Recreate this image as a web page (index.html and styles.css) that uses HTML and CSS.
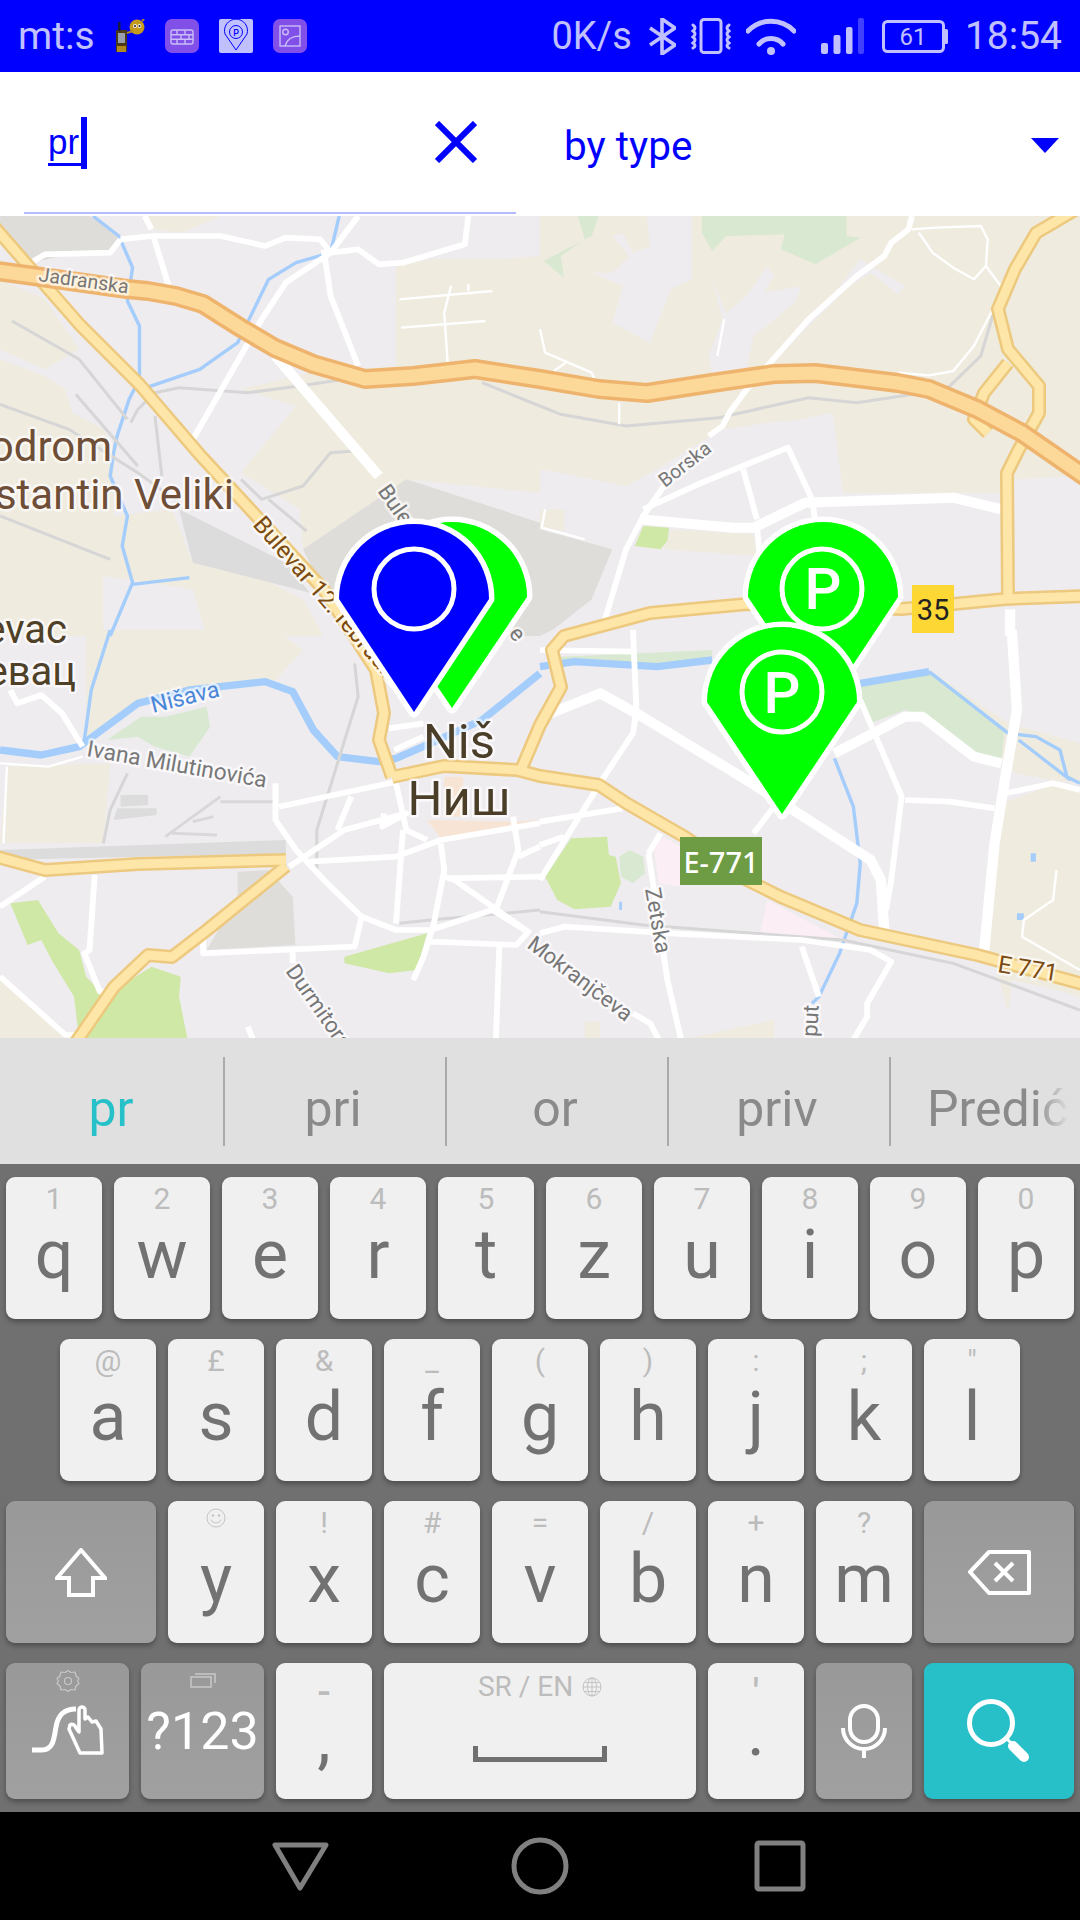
FILE: index.html
```html
<!DOCTYPE html>
<html lang="en">
<head>
<meta charset="utf-8">
<title>Map search</title>
<link rel="stylesheet" href="styles.css">
</head>
<body>
<div class="phone">
  <header class="status">
    <span class="st-text">mt:s</span>
    <svg class="st-gps" viewBox="0 0 30 34"><rect x="1" y="11" width="11" height="22" rx="1" fill="#4a3a18"/><rect x="3" y="14" width="7" height="10" fill="#9a9fb0"/><rect x="3" y="3" width="2.500" height="9" fill="#1a1a40"/><rect x="2" y="27" width="9" height="6" fill="#b08a20"/><circle cx="22" cy="8" r="7.500" fill="#c49a1c"/><circle cx="20" cy="7" r="2" fill="#eee"/><circle cx="24.500" cy="7" r="2" fill="#eee"/><circle cx="20" cy="7" r="1" fill="#222"/><circle cx="24.500" cy="7" r="1" fill="#222"/><path d="M27 2l2-2M12 14l6-2" stroke="#b08a20" stroke-width="2"/></svg>
    <svg class="st-app" viewBox="0 0 34 34"><rect width="34" height="34" rx="7" fill="#8050e8"/><g fill="none" stroke="#c9bdf8" stroke-width="1.400"><rect x="6" y="11" width="22" height="14" rx="2"/><path d="M6 15.700H28M6 20.300H28M12 11V15.700M20 11V15.700M16 15.700V20.300M24 15.700V20.300M12 20.300V25M20 20.300V25"/></g></svg>
    <svg class="st-app" viewBox="0 0 34 34"><rect width="34" height="34" rx="2" fill="#c0c0ff"/><path d="M17 31 L6 15 A11.500 11.500 0 1 1 28 15 Z" fill="none" stroke="#0000ff" stroke-width="1"/><circle cx="17" cy="13" r="6.500" fill="none" stroke="#0000ff" stroke-width="1"/><text x="17" y="16.500" class="st-p">P</text></svg>
    <svg class="st-app" viewBox="0 0 34 34"><rect width="34" height="34" rx="7" fill="#8050e8"/><g fill="none" stroke="#c9bdf8" stroke-width="1.400"><rect x="7" y="7" width="20" height="20"/><circle cx="12.500" cy="13" r="2.800"/><path d="M12 27 C14 20 20 17 27 17"/></g></svg>
    <span class="st-speed st-text">0K/s</span>
    <svg class="st-bt" viewBox="0 0 27 37"><path d="M1 10 L26 27 L13 36 V1 L26 10 L1 27" fill="none" stroke="#c0c0ff" stroke-width="3.600" stroke-linejoin="round"/></svg>
    <svg class="st-vib" viewBox="0 0 40 36"><rect x="10" y="1.500" width="20" height="33" rx="3" fill="none" stroke="#c0c0ff" stroke-width="3"/><path d="M2 7 q4 3 0 6 q4 3 0 6 q4 3 0 6 q4 3 0 5 M38 7 q-4 3 0 6 q-4 3 0 6 q-4 3 0 6 q-4 3 0 5" fill="none" stroke="#c0c0ff" stroke-width="3" stroke-linecap="round"/></svg>
    <svg class="st-wifi" viewBox="0 0 50 37"><path d="M2 13 A32 32 0 0 1 48 13 M13 26 A16 16 0 0 1 37 26" fill="none" stroke="#c0c0ff" stroke-width="5" stroke-linecap="round"/><circle cx="25" cy="33" r="4" fill="#c0c0ff"/></svg>
    <svg class="st-sig" viewBox="0 0 43 36"><rect x="0" y="25" width="7" height="11" rx="2" fill="#c0c0ff"/><rect x="12.500" y="17" width="7" height="19" rx="2" fill="#c0c0ff"/><rect x="25" y="9" width="6.500" height="27" rx="2" fill="#c0c0ff"/><rect x="37" y="0" width="6" height="36" rx="2" fill="#4040ff"/></svg>
    <svg class="st-bat" viewBox="0 0 66 33"><rect x="1.500" y="1.500" width="60" height="30" rx="4" fill="none" stroke="#c0c0ff" stroke-width="3"/><rect x="62" y="9" width="4" height="15" rx="1.500" fill="#c0c0ff"/><text x="31" y="25" class="st-batnum">61</text></svg>
    <span class="st-text st-time">18:54</span>
  </header>

  <section class="toolbar">
    <div class="search-field">
      <span class="query">pr</span><span class="caret"></span>
      <svg class="clear" viewBox="0 0 42 42"><path d="M2 2 L40 40 M40 2 L2 40" stroke="#0000ff" stroke-width="6"/></svg>
    </div>
    <div class="type-select">
      <span class="type-label">by type</span>
      <span class="type-arrow"></span>
    </div>
  </section>

  <section class="map">
    <svg class="map-svg" viewBox="0 216 1080 822">
      <defs>
        <path id="hw" d="M-10 270 L34 276 L127 289 L148 291 L176 296 L203 304 L241 328 L275 348 L313 364 L365 379 L413 376 L475 369 L540 379 L599 389 L647 393 L712 383 L774 374 L815 373 L857 378 L898 383 L929 389 L977 409 L1022 433 L1090 480"/>
        <path id="a1" d="M-10 222 L80 325 L140 385 L200 455 L260 520 L324 590 L376 670 L384 713 L379 740 L392 777"/>
        <path id="a2" d="M-10 855 L45 870 L138 864 L286 860"/>
        <path id="a3" d="M286 866 L207 930 L172 957 L148 955 L114 987 L76 1042"/>
        <path id="a4" d="M392 777 L444 766 L517 770 L540 776 L599 785 L626 803 L685 837 L747 880 L781 897 L860 930 L977 955 L1090 986"/>
        <path id="a5" d="M520 772 L540 725 L561 687 L552 650 L564 636 L650 613 L747 604 L902 609 L1005 599 L1090 596"/>
        <path id="a6" d="M1075 210 L1036 233 L1015 269 L998 309 L1008 349 L1039 386 L1039 413 L1019 449 L1007 473 L1008 599"/>
        <path id="a7" d="M1008 363 L984 393 L974 419 L988 433"/>
      </defs>

      <g transform="translate(0,216) scale(.34436,.33333)">
        <path class="tan" d="M1150 150 L1250 130 L1450 130 L1568 120 V830 L1180 790 L880 1000 L870 880 L700 770 L860 570 L700 520 L900 470 L1150 450Z"/>
        <path class="tan" d="M420 0 H640 L530 50 L430 40Z M0 190 L130 250 L230 400 L130 460 L0 400Z"/>
        <path class="tan" d="M0 430 L130 480 L190 520 L210 590 L300 640 L330 700 V900 L500 880 L560 1040 L750 1080 L880 1150 L940 1260 H600 L560 1120 L300 1080 V1260 H0Z"/>
        <path class="ind" d="M0 0 H260 L345 55 L335 100 L180 120 L90 140 L0 70Z"/>
        <path class="ind" d="M880 1000 L1180 790 L1450 880 L1568 920 V1260 H1000Z"/>
        <path class="rail-a" d="M520 880 L830 1040 L900 1130 L560 1040Z"/>
      </g>
      <g transform="translate(540,216) scale(.34436,.33333)">
        <path class="tan" d="M0 0 H1568 V780 L1380 790 L1340 830 H880 L850 590 L760 610 L660 620 L530 640 L340 760 L250 810 L60 770 L0 760Z"/>
        <path class="tan" d="M0 880 H70 V945 L0 935Z M380 940 L620 955 L630 1020 L360 1000Z"/>
        <path class="lilac" d="M150 170 L240 210 L210 320 L320 380 L380 220 L440 190 L440 0 H310 L320 90 L270 110 L240 50 L210 60 L260 120 L210 170Z"/>
        <path class="lilac" d="M500 190 L540 290 L600 240 L660 150 L680 180 L650 230 L760 210 L740 260 L620 360 L600 460 L680 440 L780 310 L870 210 L930 130 L1060 210 L1040 235 L960 170 L900 210 L760 350 L640 480 L500 480 L490 420 L530 310Z"/>
        <path class="lgreen" d="M110 0 L130 70 L60 120 L70 185 L10 135 L150 60 L170 0Z M470 0 H890 V60 L930 65 L800 145 L700 100 L710 55 L540 60 L500 105 L470 50Z"/>
        <path class="green" d="M300 930 L375 935 L370 975 L350 1000 L275 990Z"/>
        <path class="ind" d="M0 940 L210 1000 L150 1150 L40 1240 L0 1260Z"/>
      </g>
      <g transform="translate(0,630) scale(.34436,.33333)">
        <path class="tan" d="M250 0 H800 L880 60 L800 150 L640 160 L400 210 L250 330Z M20 410 L320 400 L300 640 H0Z M0 1040 L220 1230 H0Z"/>
        <path class="lgreen" d="M310 330 L410 260 L480 260 L600 230 L610 290 L550 380 L450 350 L400 320Z"/>
        <path class="green" d="M30 820 L110 810 L170 910 L230 960 L250 1040 L295 1090 L230 1230 L215 1100 L150 990 L120 930 L80 945Z"/>
        <path class="green" d="M230 1230 L340 1075 L440 1010 L525 1040 L520 1100 L545 1230Z"/>
        <path class="green" d="M1000 980 L1240 910 L1210 1020 L1130 1030 L1000 1000Z"/>
        <path class="ind" d="M690 725 L780 720 L850 800 L858 945 L600 960 L690 800Z"/>
        <path class="peach" d="M1240 570 L1500 575 L1568 570 L1280 625Z M1290 440 L1345 440 L1345 560 L1290 560Z"/>
        <path class="rail-a" d="M350 495 H430 V525 L350 530Z M340 535 H455 V555 L330 570Z M0 660 L830 630 V670 L0 690Z"/>
        <path class="rails-yard" d="M480 620 L640 500 M560 575 L620 560 M640 515 H800 M500 610 L630 615"/>
      </g>
      <g transform="translate(540,630) scale(.34436,.33333)">
        <path class="tan" d="M1310 660 L1340 520 L1490 465 L1568 480 V1100 L1500 1080 L1370 1050 L1360 1150 L1320 1000 L1290 960Z"/>
        <path class="tan" d="M1130 120 L1360 280 L1568 340 V460 L1490 450 L1380 430 L1340 390 L1350 295Z M130 1175 H175 V1230 H130Z M410 1230 L680 1170 V1230Z"/>
        <path class="lgreen" d="M930 150 L1130 130 L1350 295 L1340 390 L1260 370 L1120 260 L1060 240 L960 280 L930 230Z M60 80 L500 60 V85 L340 100 L60 90Z"/>
        <path class="green" d="M15 740 L90 625 L195 620 L200 675 L220 680 L235 760 L205 830 L100 838 L50 810Z"/>
        <path class="lgreen" d="M230 680 L260 660 L300 680 L305 730 L270 760 L235 740Z"/>
        <path class="pink" d="M330 650 L360 620 L410 650 V770 L345 760Z M660 810 L880 930 L640 905Z"/>
        <path class="water-s" d="M1425 670 h15 v25 h-15z M1385 850 h20 v20 h-20z M230 815 h8 v25 h-8z"/>
      </g>

      <g transform="translate(0,216) scale(.34436,.33333)">
        <path class="creek" d="M270 0 L345 60 L385 155 L370 255 L405 330 L405 490 L375 550 L340 660 L330 710 L320 780 L370 900 L355 990 L385 1100 L320 1260"/>
        <path class="creek" d="M385 1105 L550 1085 M425 515 L580 460 L690 380 L780 190 L860 140 L960 110 L985 0"/>
      </g>
      <g transform="translate(0,630) scale(.34436,.33333)">
        <path class="creek" d="M320 0 L265 180 L245 330"/>
        <path class="river" d="M0 360 L120 375 L230 350 L400 220 L550 180 L770 155 L850 185 L910 300 L980 380 L1100 395 L1150 385 L1250 340 L1400 270 L1568 130"/>
      </g>
      <g transform="translate(540,630) scale(.34436,.33333)">
        <path class="river" d="M0 110 L100 95 L340 110 L500 90 M930 160 L1130 125"/>
        <path class="creek" d="M1130 125 L1360 310 L1440 320 L1510 360 L1530 440 L1568 460 M1390 330 L1540 450 M855 385 L910 530 L930 700 L920 820 L870 970 L810 1100 L790 1120"/>
      </g>

      <g class="rails" transform="translate(0,216) scale(.34436,.33333)">
        <path d="M35 315 L230 430 L370 610 M220 535 L400 750 M380 620 L400 580 L450 530 L520 515 L720 530 L870 510 L1000 490 M450 600 L470 780 M0 565 L200 640 L400 770 L520 860 M1400 500 L1568 570 M700 790 L760 850 L880 810 L960 710 L1030 705 M780 850 L890 945 M0 900 L320 1030"/>
      </g>
      <g class="rails" transform="translate(540,216) scale(.34436,.33333)">
        <path d="M0 570 L60 595 L250 630 L520 605 L780 545 L920 560 L1180 520 L1280 420 L1320 280"/>
      </g>
      <g class="rails" transform="translate(0,630) scale(.34436,.33333)">
        <path d="M1030 100 L1040 200 L920 600 L920 720 M300 640 L320 540 L370 430 M1160 880 L1250 870 L1568 840"/>
      </g>
      <g class="rails" transform="translate(540,630) scale(.34436,.33333)">
        <path d="M0 845 L300 885 L880 930 L1200 1000 L1568 1140"/>
      </g>

      <g class="rd" transform="translate(0,216) scale(.34436,.33333)">
        <path d="M440 60 L640 60 L770 90 L830 65 L930 70 L960 110 L1040 100 L1100 145 L1170 140 L1350 85 L1360 0 M445 60 L490 210 M350 70 L440 60 M350 70 L320 110 L130 115 L90 140 M560 670 L760 310 L830 200 L960 110 L1040 0 M940 100 L960 240 L1040 450 M420 0 L440 40"/>
        <path class="rd-l" d="M800 420 L1100 780"/>
        <path class="rd-s" d="M1160 250 L1430 225 M1165 335 L1410 315 M1310 210 L1290 290 L1300 440 M1360 205 V225"/>
      </g>
      <g class="rd" transform="translate(540,216) scale(.34436,.33333)">
        <path d="M1080 0 L1070 40 L1020 80 L1000 120 L920 180 L780 310 L660 450 L600 520 L550 590 L530 630 L490 660 M360 810 L300 900 L250 1000 L180 1240 M300 880 L470 800 L720 695 L790 850 L800 920 M590 760 L630 910 M630 930 L640 1040"/>
        <path class="rd-l" d="M290 910 L560 935 L620 935 L770 860 L1200 845 L1340 880"/>
        <path class="rd-l" d="M1365 1180 V1260"/>
        <path class="rd-s" d="M1080 40 L1150 35 L1280 30 L1300 70 L1295 150 L1260 190 L1200 155 L1140 110 L1100 50 M1295 150 L1345 220 M1340 230 L1260 390 L1200 465 L1130 478 L1040 470 M535 310 L515 420 M0 340 L15 410 L150 470 L160 495 M40 465 L75 440 M230 560 V625 M15 880 L5 935 L130 970"/>
      </g>
      <g class="rd" transform="translate(0,630) scale(.34436,.33333)">
        <path d="M30 180 L50 220 L120 195 L180 250 L240 350 M800 460 V570 L860 660 L950 760 L1050 860 L1150 900 L1250 900 L1430 840 L1540 910 M810 530 L1150 455 M840 710 L1000 600 L1180 550 L1110 590 L1115 550 M900 695 L1150 680 L1280 630 L1568 580 M1130 295 L1230 280 M1145 360 L1230 320 M1020 500 L980 600 M1150 460 L1180 600 L1240 630 M1170 600 L1150 880 M1280 640 L1290 720 L1260 880 L1230 980 L1200 1050 M1490 560 L1505 660 L1440 840 M1505 680 L1568 650 M1290 740 L1320 750 L1540 910 M1300 745 L1568 740 M1250 935 L1500 945 L1530 910 M590 930 V970 L1030 950 L1050 860 M850 960 V1000 M275 735 L260 960 L245 970 L290 1085 L310 1085 M1450 950 L1440 1230 M130 740 L0 830 M0 1040 L190 1215 L225 1215 M720 1190 L735 1230"/>
        <path class="rd-s" d="M0 400 L140 410 L240 380 M20 410 L10 640"/>
      </g>
      <g class="rd" transform="translate(540,630) scale(.34436,.33333)">
        <path class="rd-l" d="M30 250 L175 190 L280 250 L600 450 L720 530 L960 690 L990 750 L1000 910 M855 370 L1060 260 L1110 260 L1260 380 L1340 400 M1370 0 L1385 240 L1350 450 L1320 640 L1290 960"/>
        <path d="M270 0 L280 240 L270 310 L180 450 L0 750 M930 210 L1050 500 L1020 750 L1005 840 M1060 510 L1190 515 L1320 535 M1350 490 L1490 460 L1568 480 M0 575 L240 535 M0 645 L70 620 M0 910 L70 890 L380 910 L760 930 L960 960 L1020 995 L950 1120 L950 1160 L910 1230 M315 670 L350 610 M315 670 L370 1050 L410 1230 M760 950 L810 1100 M270 1150 L320 1180 L345 1230 M620 610 L680 530 M0 60 L270 65"/>
        <path class="rd-s" d="M1500 720 L1490 810 L1405 870 L1400 920 L1568 1020"/>
      </g>

      <use href="#a1" class="art-c"/><use href="#a2" class="art-c"/><use href="#a3" class="art-c"/><use href="#a4" class="art-c"/><use href="#a5" class="art-c"/><use href="#a6" class="art-c"/><use href="#a7" class="art-c"/>
      <use href="#a1" class="art-f"/><use href="#a2" class="art-f"/><use href="#a3" class="art-f"/><use href="#a4" class="art-f"/><use href="#a5" class="art-f"/><use href="#a6" class="art-f"/><use href="#a7" class="art-f"/>
      <use href="#hw" class="hw-c"/><use href="#hw" class="hw-f"/>

      <text class="lb lb-s" x="38" y="281" transform="rotate(8 38 281)">Jadranska</text>
      <text class="lb lb-big lb-brown" x="112" y="461" text-anchor="end">Aerodrom</text>
      <text class="lb lb-big lb-brown" x="234" y="509" text-anchor="end">Konstantin Veliki</text>
      <text class="lb lb-big lb-dark" x="67" y="643" text-anchor="end">Medoševac</text>
      <text class="lb lb-big lb-dark" x="76" y="685" text-anchor="end">Медошевац</text>
      <text class="lb lb-water" x="153" y="713" transform="rotate(-14 153 713)">Nišava</text>
      <text class="lb lb-m" x="86" y="756" transform="rotate(10 86 756)">Ivana Milutinovića</text>
      <text class="lb lb-art" x="252" y="525" transform="rotate(49 252 525)">Bulevar 12. februara</text>
      <text class="lb lb-road" x="377" y="491" transform="rotate(55 377 491)">Bulevar</text>
      <text class="lb lb-road" x="508" y="634" transform="rotate(50 508 634)">e</text>
      <text class="lb lb-s" x="665" y="488" transform="rotate(-38 665 488)">Borska</text>
      <text class="lb lb-road" x="645" y="889" transform="rotate(80 645 889)">Zetska</text>
      <text class="lb lb-road" x="526" y="947" transform="rotate(37 526 947)">Mokranjčeva</text>
      <text class="lb lb-road" x="285" y="971" transform="rotate(55 285 971)">Durmitorska</text>
      <text class="lb lb-road" x="817" y="1037" transform="rotate(-87 817 1037)">put</text>
      <text class="lb lb-art" x="997" y="972" transform="rotate(9 997 972)">E 771</text>
      <text class="lb lb-city" x="459" y="758">Niš</text>
      <text class="lb lb-city" x="459" y="815">Ниш</text>

      <rect x="680" y="837" width="82" height="48" fill="#6e9c44"/>
      <text class="sign-e" x="721" y="873">E-771</text>
      <rect x="912" y="585" width="42" height="48" fill="#fdd835"/>
      <text class="sign-n" x="933" y="620">35</text>

      <path class="pin pin-green" d="M377 597 A75 75 0 0 1 527 597 L452 708Z"/>
      <path class="pin pin-blue" d="M339 599 A75 75 0 0 1 489 599 L414 712Z"/>
      <circle class="ring" cx="414" cy="589" r="40"/>
      <path class="pin pin-green" d="M748 597 A75 75 0 0 1 898 597 L823 710Z"/>
      <circle class="ring" cx="822" cy="589" r="40"/>
      <text class="pin-p" x="823" y="609">P</text>
      <path class="pin pin-green" d="M707 702 A75 75 0 0 1 857 702 L782 814Z"/>
      <circle class="ring" cx="782" cy="692" r="40"/>
      <text class="pin-p" x="782" y="713">P</text>
    </svg>
  </section>

  <section class="keyboard">
    <div class="suggest">
      <span class="sug sug-on">pr</span>
      <span class="sug">pri</span>
      <span class="sug">or</span>
      <span class="sug">priv</span>
      <span class="sug sug-last">Predić</span>
    </div>
    <div class="keys">
      <div class="row">
        <div class="key"><span class="hint">1</span><span class="ltr">q</span></div>
        <div class="key"><span class="hint">2</span><span class="ltr">w</span></div>
        <div class="key"><span class="hint">3</span><span class="ltr">e</span></div>
        <div class="key"><span class="hint">4</span><span class="ltr">r</span></div>
        <div class="key"><span class="hint">5</span><span class="ltr">t</span></div>
        <div class="key"><span class="hint">6</span><span class="ltr">z</span></div>
        <div class="key"><span class="hint">7</span><span class="ltr">u</span></div>
        <div class="key"><span class="hint">8</span><span class="ltr">i</span></div>
        <div class="key"><span class="hint">9</span><span class="ltr">o</span></div>
        <div class="key"><span class="hint">0</span><span class="ltr">p</span></div>
      </div>
      <div class="row row-mid">
        <div class="key"><span class="hint">@</span><span class="ltr">a</span></div>
        <div class="key"><span class="hint">£</span><span class="ltr">s</span></div>
        <div class="key"><span class="hint">&amp;</span><span class="ltr">d</span></div>
        <div class="key"><span class="hint">_</span><span class="ltr">f</span></div>
        <div class="key"><span class="hint">(</span><span class="ltr">g</span></div>
        <div class="key"><span class="hint">)</span><span class="ltr">h</span></div>
        <div class="key"><span class="hint">:</span><span class="ltr">j</span></div>
        <div class="key"><span class="hint">;</span><span class="ltr">k</span></div>
        <div class="key"><span class="hint">"</span><span class="ltr">l</span></div>
      </div>
      <div class="row">
        <div class="key key-fn key-wide">
          <svg class="ic-shift" viewBox="0 0 52 49"><path d="M26 2 L50 30 H38 V47 H14 V30 H2 Z" fill="none" stroke="#fff" stroke-width="4"/></svg>
        </div>
        <div class="key"><span class="hint"><svg class="ic-smile" viewBox="0 0 20 20"><g fill="none" stroke="#c4c4c4" stroke-width="1"><circle cx="10" cy="10" r="9"/><path d="M5 11.500 C6.500 16 13.500 16 15 11.500"/></g><circle cx="7" cy="7.500" r="1.200" fill="#c4c4c4"/><circle cx="13" cy="7.500" r="1.200" fill="#c4c4c4"/></svg></span><span class="ltr">y</span></div>
        <div class="key"><span class="hint">!</span><span class="ltr">x</span></div>
        <div class="key"><span class="hint">#</span><span class="ltr">c</span></div>
        <div class="key"><span class="hint">=</span><span class="ltr">v</span></div>
        <div class="key"><span class="hint">/</span><span class="ltr">b</span></div>
        <div class="key"><span class="hint">+</span><span class="ltr">n</span></div>
        <div class="key"><span class="hint">?</span><span class="ltr">m</span></div>
        <div class="key key-fn key-wide">
          <svg class="ic-del" viewBox="0 0 63 45"><path d="M21 2 H61 V43 H21 L2 22 Z M27 13 L45 31 M45 13 L27 31" fill="none" stroke="#fff" stroke-width="4" stroke-linejoin="round"/></svg>
        </div>
      </div>
      <div class="row row-low">
        <div class="key key-fn key-gesture">
          <svg class="ic-gear" viewBox="0 0 24 24"><path d="M12 1.500 L15 3.500 L19 3 L20 7 L23 9.500 L21.500 12 L23 14.500 L20 17 L19 21 L15 20.500 L12 22.500 L9 20.500 L5 21 L4 17 L1 14.500 L2.500 12 L1 9.500 L4 7 L5 3 L9 3.500 Z" fill="none" stroke="#c8c8c8" stroke-width="1.200" stroke-linejoin="round"/><circle cx="12" cy="12" r="3.500" fill="none" stroke="#c8c8c8" stroke-width="1.200"/></svg>
          <svg class="ic-swipe" viewBox="0 0 72 50"><path d="M0 45 H10 C22 45 22 32 24 22 C26 10 32 4 44 4" fill="none" stroke="#fff" stroke-width="5"/><path d="M38 20 C40 18 43 20 44 23 L47 27 V5 C47 1 53 1 53 5 V14 L56 12 L60 17 L64 16 L69 24 L70 48 H48 L37 24 Z" fill="#9d9d9d" stroke="#fff" stroke-width="3.500" stroke-linejoin="round"/></svg>
        </div>
        <div class="key key-fn key-gesture">
          <svg class="ic-win" viewBox="0 0 26 16"><g fill="none" stroke="#c8c8c8" stroke-width="1.500"><rect x="1" y="5" width="20" height="10"/><path d="M5 2 H25 V11"/></g></svg>
          <span class="ltr ltr-num">?123</span>
        </div>
        <div class="key"><span class="hint hint-dash">-</span><span class="ltr ltr-low">,</span></div>
        <div class="key key-space">
          <span class="hint hint-lang">SR / EN<svg class="ic-globe" viewBox="0 0 20 20"><g fill="none" stroke="#c4c4c4" stroke-width="1"><circle cx="10" cy="10" r="9"/><ellipse cx="10" cy="10" rx="4.500" ry="9"/><path d="M10 1 V19 M1 10 H19 M2.500 5.500 H17.500 M2.500 14.500 H17.500"/></g></svg></span>
          <svg class="ic-bar" viewBox="0 0 134 16"><path d="M2.500 0 V13.500 H131.500 V0" fill="none" stroke="#707070" stroke-width="5"/></svg>
        </div>
        <div class="key"><span class="hint hint-quote">'</span><span class="ltr ltr-dot">.</span></div>
        <div class="key key-fn">
          <svg class="ic-mic" viewBox="0 0 46 54"><g fill="none" stroke="#fff" stroke-width="4"><rect x="9" y="2" width="28" height="36" rx="14"/><path d="M2 24 A21 21 0 0 0 44 24 M23 45 V54"/></g></svg>
        </div>
        <div class="key key-go key-wide">
          <svg class="ic-search" viewBox="0 0 64 64"><circle cx="24" cy="24" r="21.500" fill="none" stroke="#fff" stroke-width="5"/><path d="M40 40 L46 46" stroke="#fff" stroke-width="3"/><path d="M46 47 L57 58" stroke="#fff" stroke-width="10" stroke-linecap="round"/></svg>
        </div>
      </div>
    </div>
  </section>

  <nav class="navbar">
    <svg class="nav-ic" viewBox="0 0 60 52"><path d="M6 5 H57 L31 48 Z" transform="translate(-1,0)" fill="none" stroke="#808080" stroke-width="5" stroke-linejoin="round"/></svg>
    <svg class="nav-ic" viewBox="0 0 60 60"><circle cx="30" cy="30" r="26" fill="none" stroke="#808080" stroke-width="5"/></svg>
    <svg class="nav-ic" viewBox="0 0 60 52"><rect x="7" y="3" width="46" height="46" rx="2" fill="none" stroke="#808080" stroke-width="5"/></svg>
  </nav>
</div>
</body>
</html>
```

FILE: styles.css
```css
* { box-sizing: border-box; }
html, body { margin: 0; padding: 0; }
body { width: 1080px; height: 1920px; overflow: hidden; font-family: Roboto, "Noto Sans CJK SC", sans-serif; background: #000; }
.phone { width: 1080px; height: 1920px; display: flex; flex-direction: column; }

/* status bar */
.status { height: 72px; background: #0000ff; display: flex; align-items: center; padding: 0 18px 0 18px; gap: 20px; color: #c0c0ff; flex: none; }
.st-text { font-size: 39px; line-height: 72px; }
.st-speed { margin-left: auto; font-size: 38px; margin-right: -3px; }
.st-time { font-size: 39px; margin-left: -3px; }
.st-gps { width: 30px; height: 34px; }
.st-app { width: 34px; height: 34px; }
.st-bt { width: 27px; height: 37px; }
.st-vib { width: 40px; height: 36px; margin-left: -5px; }
.st-wifi { width: 50px; height: 37px; margin-left: -5px; }
.st-sig { width: 43px; height: 36px; margin-left: 5px; }
.st-bat { width: 66px; height: 33px; margin-left: -2px; }
.st-p { font: 500 9px Roboto, sans-serif; fill: #0000ff; text-anchor: middle; }
.st-batnum { font: 400 24px Roboto, sans-serif; fill: #c0c0ff; text-anchor: middle; }

/* toolbar */
.toolbar { height: 144px; background: #fff; display: flex; flex: none; color: #0000ff; }
.search-field { width: 492px; height: 142px; margin-left: 24px; border-bottom: 2px solid #b4bcff; display: flex; align-items: center; padding-left: 24px; position: relative; }
.query { font-family: "Liberation Sans", sans-serif; font-size: 35px; line-height: 42px; border-bottom: 3px solid #0000ff; height: 45px; width: 36px; margin-top: 2px; }
.caret { width: 6px; height: 52px; background: #0000ff; margin-left: -3px; margin-top: 2px; }
.clear { width: 42px; height: 42px; margin-left: auto; margin-right: 39px; }
.type-select { flex: 1; display: flex; align-items: center; padding: 0 21px 0 48px; height: 144px; }
.type-label { font-size: 40.500px; line-height: 46px; margin-top: 4px; }
.type-arrow { margin-left: auto; width: 0; height: 0; border-left: 14.500px solid transparent; border-right: 14.500px solid transparent; border-top: 15px solid #0000ff; margin-top: 2px; }

/* map */
.map { height: 822px; flex: none; overflow: hidden; }
.map-svg { display: block; width: 1080px; height: 822px; background: #efecf0; }
.tan { fill: #efebdf; }
.lilac { fill: #efecf0; }
.green { fill: #cfe8a6; }
.lgreen { fill: #d9e8d0; }
.ind { fill: #dfddd9; }
.peach { fill: #f7e4d4; }
.pink { fill: #fbeef4; }
.water-s { fill: #a4cdfb; }
.rail-a { fill: #dcdcdc; }
.rails-yard { fill: none; stroke: #d8d8d8; stroke-width: 9; }
.creek { fill: none; stroke: #a4cdfb; stroke-width: 10; stroke-linejoin: round; }
.river { fill: none; stroke: #a4cdfb; stroke-width: 22; stroke-linejoin: round; }
.rails { fill: none; stroke: #d6d6d6; stroke-width: 9; }
.rd { fill: none; stroke: #fff; stroke-width: 17; stroke-linejoin: round; }
.rd .rd-l { stroke-width: 30; }
.rd .rd-s { stroke-width: 7; }
.art-c, .art-f, .hw-c, .hw-f { fill: none; stroke-linejoin: round; }
.art-c { stroke: #ecc97e; stroke-width: 14; }
.art-f { stroke: #fde6a8; stroke-width: 9; }
.hw-c { stroke: #eeb46e; stroke-width: 20; }
.hw-f { stroke: #fdd999; stroke-width: 13; }
.lb { font-family: Roboto, "Noto Sans CJK SC", sans-serif; paint-order: stroke; stroke: rgba(255,255,255,.65); stroke-width: 5px; stroke-linejoin: round; }
.lb-road { font-size: 22px; fill: #777; }
.lb-s { font-size: 19.500px; fill: #777; }
.lb-m { font-size: 22.700px; fill: #777; }
.lb-art { font-size: 24px; fill: #7a4a10; }
.lb-water { font-size: 23px; fill: #4a86d8; }
.lb-big { font-size: 42px; }
.lb-brown { fill: #6f4e37; }
.lb-big.lb-dark { font-size: 40px; fill: #4f4028; }
.lb-city { font-size: 49px; fill: #4a3e28; text-anchor: middle; }
.sign-e { font: 500 29px "Noto Sans", sans-serif; fill: #fff; text-anchor: middle; }
.sign-n { font: 400 29px Roboto, sans-serif; fill: #222; text-anchor: middle; }
.pin { stroke: #fff; stroke-width: 11; paint-order: stroke; stroke-linejoin: round; }
.pin-green { fill: #00ff00; }
.pin-blue { fill: #0000ff; }
.ring { fill: none; stroke: #fff; stroke-width: 5; }
.pin-p { font: 500 58px Roboto, sans-serif; fill: #fff; text-anchor: middle; }

/* keyboard */
.keyboard { flex: none; height: 774px; display: flex; flex-direction: column; }
.suggest { height: 126px; background: #e0e0e0; display: flex; align-items: center; padding-left: 3px; overflow: hidden; flex: none; }
.sug { width: 222px; height: 89px; flex: none; border-right: 2px solid #aaa; padding-right: 4px; font-size: 50px; line-height: 104px; color: #8a8a8a; text-align: center; }
.sug-on { color: #26c0c8; }
.sug-last { border-right: 0; padding-right: 0; width: 178px; text-align: left; padding-left: 36px; overflow: hidden; white-space: nowrap; -webkit-mask-image: linear-gradient(to right, #000 calc(100% - 34px), transparent); mask-image: linear-gradient(to right, #000 calc(100% - 34px), transparent); }
.keys { flex: 1; background: #707070; padding: 13px 6px; display: flex; flex-direction: column; gap: 20px; }
.row { display: flex; gap: 12px; height: 142px; flex: none; }
.row-mid { padding: 0 54px; }
.row-low { height: 136px; }
.key { flex: 1 1 0; min-width: 0; background: #f0f0f0; border-radius: 9px; box-shadow: 0 3px 5px rgba(0,0,0,.3); display: flex; flex-direction: column; align-items: center; padding-top: 7px; color: #727272; }
.key-fn { background: linear-gradient(#999, #a0a0a0); justify-content: center; padding-top: 0; }
.key-wide { flex: 0 0 150px; }
.key-gesture { flex: 0 0 123px; justify-content: flex-start; padding-top: 6px; }
.key-space { flex: 0 0 312px; }
.key-go { background: #28c0c8; justify-content: center; padding-top: 0; }
.hint { font-size: 30px; line-height: 30px; height: 30px; color: #bcbcbc; display: flex; align-items: center; }
.ltr { font-size: 68px; font-weight: 400; line-height: 66px; margin-top: 8px; }
.ltr-low { margin-top: -3px; }
.ltr-dot { margin-top: -9px; }
.ltr-num { font-size: 52px; line-height: 54px; margin-top: 17px; color: #fff; }
.hint-dash { margin-top: 8px; font-size: 40px; font-weight: 500; }
.hint-quote { margin-top: 8px; font-size: 38px; font-weight: 500; }
.hint-lang { font-size: 28px; margin-top: 2px; gap: 9px; }
.ic-smile { width: 20px; height: 20px; margin-top: -10px; }
.ic-globe { width: 20px; height: 20px; }
.ic-shift { width: 52px; height: 49px; }
.ic-del { width: 63px; height: 45px; }
.ic-mic { width: 46px; height: 54px; }
.ic-search { width: 64px; height: 64px; }
.ic-gear { width: 24px; height: 24px; }
.ic-swipe { width: 72px; height: 50px; margin-top: 12px; align-self: flex-start; margin-left: 26px; }
.ic-win { width: 26px; height: 16px; margin-top: 3px; }
.ic-bar { width: 134px; height: 16px; margin-top: 44px; }

/* nav */
.navbar { height: 108px; flex: none; background: #000; display: flex; align-items: center; justify-content: center; gap: 180px; }
.nav-ic { width: 60px; height: 60px; }
```
